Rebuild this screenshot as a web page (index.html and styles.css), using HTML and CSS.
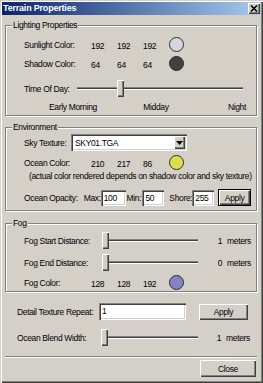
FILE: index.html
```html
<!DOCTYPE html>
<html>
<head>
<meta charset="utf-8">
<title>Terrain Properties</title>
<link rel="stylesheet" href="styles.css">
</head>
<body>
<div class="window">
  <div class="titlebar">
    <span class="title">Terrain Properties</span>
    <span class="close-btn"><svg width="8" height="7" viewBox="0 0 8 7"><path d="M1 0.5L7 6.5M7 0.5L1 6.5" stroke="#000" stroke-width="1.6" fill="none"/></svg></span>
  </div>

  <fieldset class="group group-lighting">
    <legend>Lighting Properties</legend>
    <div class="gbody lighting-body">
      <div class="color-row">
        <span>Sunlight Color:</span><span class="num">192</span><span class="num">192</span><span class="num">192</span><span class="swatch swatch-sun"></span>
      </div>
      <div class="color-row row-gap2">
        <span>Shadow Color:</span><span class="num">64</span><span class="num">64</span><span class="num">64</span><span class="swatch swatch-shadow"></span>
      </div>
      <div class="tod-row">
        <span>Time Of Day:</span>
        <div class="slider"><div class="track"></div><div class="thumb" style="left:40px"></div></div>
      </div>
      <div class="ticks">
        <span class="tick-a">Early Morning</span><span class="tick-b">Midday</span><span class="tick-c">Night</span>
      </div>
    </div>
  </fieldset>

  <fieldset class="group group-env">
    <legend>Environment</legend>
    <div class="gbody env-body">
      <div class="sky-row">
        <span>Sky Texture:</span>
        <div class="combo"><span class="combo-text">SKY01.TGA</span><span class="combo-btn"><svg width="7" height="4" viewBox="0 0 7 4"><path d="M0 0H7L3.5 4Z" fill="#000"/></svg></span></div>
      </div>
      <div class="color-row row-gap3">
        <span>Ocean Color:</span><span class="num">210</span><span class="num">217</span><span class="num">86</span><span class="swatch swatch-ocean"></span>
      </div>
      <div class="note">(actual color rendered depends on shadow color and sky texture)</div>
      <div class="opacity-row">
        <span class="op-label">Ocean Opacity:</span>
        <span class="op-max">Max:</span>
        <span class="field field-max">100</span>
        <span class="op-min">Min:</span>
        <span class="field field-min">50</span>
        <span class="op-shore">Shore:</span>
        <span class="field field-shore">255</span>
        <span class="btn btn-default btn-apply-op">Apply</span>
      </div>
    </div>
  </fieldset>

  <fieldset class="group group-fog">
    <legend>Fog</legend>
    <div class="gbody fog-body">
      <div class="fog-row">
        <span>Fog Start Distance:</span>
        <div class="slider"><div class="track"></div><div class="thumb" style="left:0px"></div></div>
        <span class="value"><span>1</span><span>meters</span></span>
      </div>
      <div class="fog-row row-gap5">
        <span>Fog End Distance:</span>
        <div class="slider"><div class="track"></div><div class="thumb" style="left:0px"></div></div>
        <span class="value"><span>0</span><span>meters</span></span>
      </div>
      <div class="color-row row-gap3">
        <span>Fog Color:</span><span class="num">128</span><span class="num">128</span><span class="num">192</span><span class="swatch swatch-fog"></span>
      </div>
    </div>
  </fieldset>

  <div class="bottom">
    <div class="detail-row">
      <span>Detail Texture Repeat:</span>
      <span class="field field-detail">1</span>
      <span class="btn btn-apply">Apply</span>
    </div>
    <div class="blend-row">
      <span>Ocean Blend Width:</span>
      <div class="slider slider-blend"><div class="track"></div><div class="thumb" style="left:0px"></div></div>
      <span class="value"><span>1</span><span>meters</span></span>
    </div>
  </div>

  <div class="separator"></div>

  <div class="footer">
    <span class="btn btn-close">Close</span>
  </div>
</div>
</body>
</html>
```

FILE: styles.css
```css
* { box-sizing: border-box; }
html, body { margin: 0; padding: 0; }
body {
  width: 263px;
  height: 383px;
  overflow: hidden;
  background: #d4d0c8;
  font-family: "Liberation Sans", Arial, sans-serif;
  font-size: 8.5px;
  letter-spacing: -0.35px;
  line-height: 10px;
  color: #000;
}

.window {
  width: 263px;
  height: 383px;
  padding: 2px;
  display: flex;
  flex-direction: column;
  background: #d4d0c8;
  box-shadow: inset 1px 1px 0 #d4d0c8, inset 2px 2px 0 #fff, inset -1px -1px 0 #404040, inset -2px -2px 0 #808080;
}

.titlebar {
  height: 13px;
  flex: none;
  display: flex;
  align-items: center;
  justify-content: space-between;
  padding: 0 1px;
  background: linear-gradient(to right, #0a246a, #a6caf0);
}
.title {
  color: #fff;
  font-weight: bold;
  font-size: 9px;
  letter-spacing: -0.2px;
  line-height: 13px;
}
.close-btn {
  width: 12px;
  height: 11px;
  display: flex;
  align-items: center;
  justify-content: center;
  background: #d4d0c8;
  box-shadow: inset 1px 1px 0 #fff, inset -1px -1px 0 #404040, inset -2px -2px 0 #808080;
}

/* group boxes */
.group {
  margin: 0 4px 0 3px;
  padding: 0;
  min-width: 0;
  border: 1px solid #808080;
  box-shadow: inset 1px 1px 0 #fff, 1px 1px 0 #fff;
}
.group legend {
  margin-left: 6px;
  padding: 0 1px;
  height: 10px;
  line-height: 10px;
  background: #d4d0c8;
}
.group-lighting { margin-top: 5px; }
.group-env { margin-top: 6px; }
.group-fog { margin-top: 7px; }

.gbody { padding-left: 18px; padding-right: 5px; }
.lighting-body { padding-top: 6px; padding-bottom: 3px; }
.env-body { padding-top: 2px; padding-bottom: 4px; }
.fog-body { padding-top: 4px; padding-bottom: 0; }

.row-gap2 { margin-top: 2px; }
.row-gap3 { margin-top: 3px; }
.row-gap5 { margin-top: 5px; }

.color-row {
  display: grid;
  grid-template-columns: 67px 26px 26px 26px 15px;
  align-items: center;
  height: 17px;
}
.num { padding-top: 2px; }
.swatch {
  width: 15px;
  height: 15px;
  border-radius: 50%;
  border: 1px solid #2e2e2e;
}
.swatch-sun { background: #d5d5dd; }
.swatch-shadow { background: #404040; }
.swatch-ocean { background: #dbdf4e; }
.swatch-fog { background: #8282c6; }

/* sliders */
.slider {
  position: relative;
  height: 17px;
  display: flex;
  align-items: center;
}
.track {
  flex: 1;
  height: 3px;
  border-top: 1px solid #808080;
  border-bottom: 1px solid #fff;
  background: #404040;
}
.thumb {
  position: absolute;
  top: 0;
  width: 7px;
  height: 17px;
  background: #d4d0c8;
  box-shadow: inset 1px 1px 0 #fff, inset -1px -1px 0 #404040, inset -2px -2px 0 #808080;
}

.tod-row {
  margin-top: 8px;
  display: grid;
  grid-template-columns: 53px 166px;
  align-items: center;
  height: 17px;
}
.ticks {
  margin-top: 5px;
  display: grid;
  grid-template-columns: 98px 68px 56px;
  height: 10px;
}
.tick-a, .tick-b { text-align: center; }
.tick-c { text-align: right; }

/* environment */
.sky-row {
  display: grid;
  grid-template-columns: 47px 116px;
  align-items: center;
  height: 17px;
}
.combo {
  height: 17px;
  display: flex;
  align-items: center;
  padding: 2px;
  background: #fff;
  box-shadow: inset 1px 1px 0 #808080, inset 2px 2px 0 #404040, inset -1px -1px 0 #fff, inset -2px -2px 0 #d4d0c8;
}
.combo-text { flex: 1; padding-left: 2px; }
.combo-btn {
  width: 11px;
  height: 13px;
  display: flex;
  align-items: center;
  justify-content: center;
  background: #d4d0c8;
  box-shadow: inset 1px 1px 0 #fff, inset -1px -1px 0 #404040, inset -2px -2px 0 #808080;
}
.note {
  height: 10px;
  padding-left: 5px;
  white-space: nowrap;
}

.opacity-row {
  margin-top: 8px;
  display: flex;
  align-items: center;
  height: 17px;
  white-space: nowrap;
}
.op-label { width: 60px; }
.op-max { width: 17px; }
.op-min { width: 16px; margin-left: 1px; }
.op-shore { width: 23px; margin-left: 5px; }

.field {
  height: 16px;
  line-height: 16px;
  padding-left: 3px;
  background: #fff;
  box-shadow: inset 1px 1px 0 #808080, inset 2px 2px 0 #404040, inset -1px -1px 0 #fff, inset -2px -2px 0 #d4d0c8;
}
.field-max { width: 25px; }
.field-min { width: 22px; }
.field-shore { width: 22px; }
.field-detail { width: 87px; height: 17px; line-height: 17px; }

.btn {
  display: flex;
  align-items: center;
  justify-content: center;
  background: #d4d0c8;
  box-shadow: inset 1px 1px 0 #fff, inset -1px -1px 0 #404040, inset -2px -2px 0 #808080;
}
.btn-default {
  border: 1px solid #000;
}
.btn-apply-op { width: 33px; height: 17px; margin-left: 4px; }
.btn-apply { width: 49px; height: 16px; margin-left: 13px; }
.btn-close { width: 56px; height: 17px; }

/* fog */
.fog-row {
  display: grid;
  grid-template-columns: 78px 96px 1fr;
  align-items: center;
  height: 17px;
}
.value {
  display: flex;
  justify-content: flex-end;
  gap: 5px;
}

/* bottom area */
.bottom {
  padding: 0 11px 0 15px;
}
.detail-row {
  margin-top: 11px;
  display: grid;
  grid-template-columns: 82px 87px 62px;
  align-items: center;
  height: 17px;
}
.blend-row {
  margin-top: 9px;
  display: grid;
  grid-template-columns: 84px 98px 1fr;
  align-items: center;
  height: 17px;
}
.slider-blend .track { margin-left: 2px; margin-right: 1px; }

.separator {
  margin: 10px 4px 0 3px;
  height: 2px;
  border-top: 1px solid #808080;
  border-bottom: 1px solid #fff;
}
.footer {
  margin-top: 2px;
  display: flex;
  justify-content: flex-end;
  padding-right: 5px;
}
```
